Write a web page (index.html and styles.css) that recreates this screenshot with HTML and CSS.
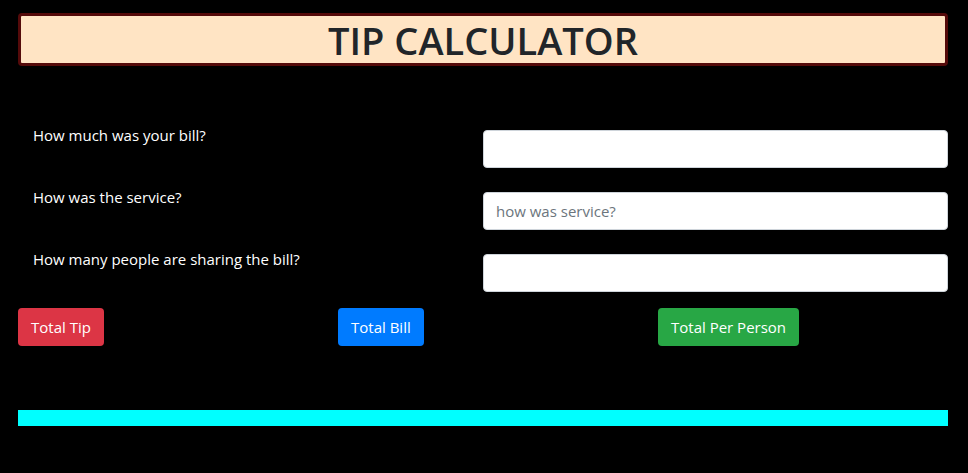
FILE: index.html
```html
<!DOCTYPE html>
<html lang="en">
<head>
<meta charset="utf-8">
<title>Tip Calculator</title>
<link rel="stylesheet" href="styles.css">
</head>
<body>
<div class="page">
  <header class="title-box">
    <h1 class="title">TIP CALCULATOR</h1>
  </header>

  <form class="form">
    <div class="field">
      <label class="label" for="bill">How much was your bill?</label>
      <input class="input" id="bill" type="text">
    </div>
    <div class="field">
      <label class="label" for="service">How was the service?</label>
      <input class="input" id="service" type="text" placeholder="how was service?">
    </div>
    <div class="field">
      <label class="label" for="people">How many people are sharing the bill?</label>
      <input class="input" id="people" type="text">
    </div>
  </form>

  <div class="actions">
    <div class="action"><button class="btn btn-red" type="button">Total Tip</button></div>
    <div class="action"><button class="btn btn-blue" type="button">Total Bill</button></div>
    <div class="action"><button class="btn btn-green" type="button">Total Per Person</button></div>
  </div>

  <div class="result-bar"></div>
</div>
</body>
</html>
```

FILE: styles.css
```css
* { box-sizing: border-box; }

html, body {
  margin: 0;
  padding: 0;
  background: #000;
}

body {
  font-family: "Open Sans", "Noto Sans", sans-serif;
  color: #fff;
  font-size: 16px;
  line-height: 24px;
}

.page {
  padding: 13px 20px 0 18px;
}

.title-box {
  background: #ffe4c4;
  border: 3px solid #550a0a;
  border-radius: 4px;
  height: 53px;
  display: flex;
  align-items: center;
  justify-content: center;
}

.title {
  margin: 0;
  font-size: 38px;
  font-weight: 600;
  line-height: 46px;
  color: #212529;
}

.form {
  margin-top: 64px;
  display: flex;
  flex-direction: column;
  gap: 24px;
}

.field {
  display: grid;
  grid-template-columns: 465px 1fr;
  align-items: start;
}

.label {
  padding-left: 15px;
  margin-top: -7px;
  font-size: 15px;
}

.input {
  height: 38px;
  width: 100%;
  border: 1px solid #ced4da;
  border-radius: 4px;
  background: #fff;
  padding: 6px 12px;
  font-family: inherit;
  font-size: 15px;
  color: #495057;
}

.input::placeholder {
  color: #6c757d;
}

.actions {
  margin-top: 16px;
  display: grid;
  grid-template-columns: 320px 320px 1fr;
}

.btn {
  height: 38px;
  border: 1px solid transparent;
  border-radius: 4px;
  padding: 6px 12px;
  font-family: inherit;
  font-size: 15px;
  line-height: 24px;
  color: #fff;
  cursor: pointer;
}

.btn-red { background: #dc3545; }
.btn-blue { background: #007bff; }
.btn-green { background: #28a745; }

.result-bar {
  margin-top: 64px;
  height: 16px;
  background: #00ffff;
}
```
